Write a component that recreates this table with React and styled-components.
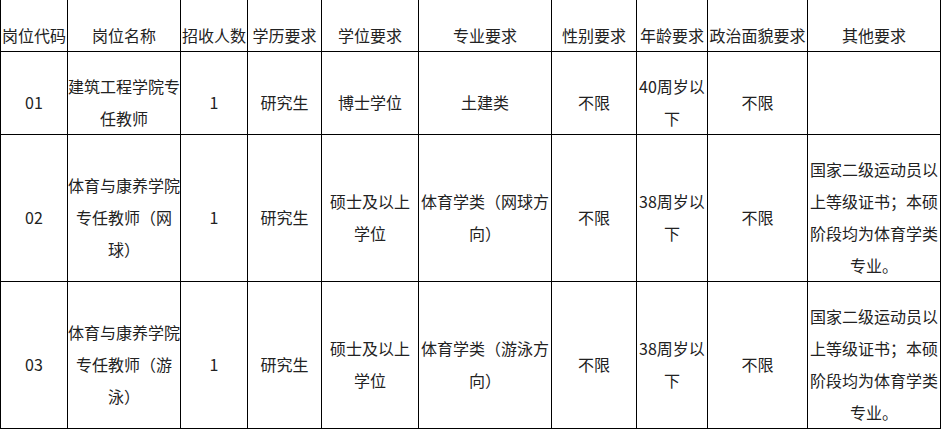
import React from 'react'
import styled, { createGlobalStyle } from 'styled-components'

const Global = createGlobalStyle`
  body {
    margin: 0;
    background: #fff;
  }
`

const Table = styled.table`
  border-collapse: collapse;
  table-layout: fixed;
  width: 940px;
  font-family: "Noto Sans CJK SC", "Noto Sans", sans-serif;
  font-size: 16px;
  line-height: 32px;
  color: #222;
`

const Col = styled.col`
  width: ${({ $w }) => $w}px;
`

const Cell = styled.td`
  border: 1px solid #000;
  padding: 18px 0 0;
  text-align: center;
  vertical-align: middle;
  white-space: nowrap;
  overflow: hidden;
`

const HeadCell = styled(Cell).attrs({ as: 'th' })`
  border-top: none;
  padding-top: 19px;
  font-weight: normal;
`

const widths = [67, 113, 67, 74, 97, 133, 85, 71, 100, 133]

const head = ['岗位代码', '岗位名称', '招收人数', '学历要求', '学位要求', '专业要求', '性别要求', '年龄要求', '政治面貌要求', '其他要求']

const other = ['国家二级运动员以', '上等级证书；本硕', '阶段均为体育学类', '专业。']

const rows = [
  [['01'], ['建筑工程学院专', '任教师'], ['1'], ['研究生'], ['博士学位'], ['土建类'], ['不限'], ['40周岁以', '下'], ['不限'], []],
  [['02'], ['体育与康养学院', '专任教师（网', '球）'], ['1'], ['研究生'], ['硕士及以上', '学位'], ['体育学类（网球方', '向）'], ['不限'], ['38周岁以', '下'], ['不限'], other],
  [['03'], ['体育与康养学院', '专任教师（游', '泳）'], ['1'], ['研究生'], ['硕士及以上', '学位'], ['体育学类（游泳方', '向）'], ['不限'], ['38周岁以', '下'], ['不限'], other],
]

const Lines = ({ lines }) =>
  lines.map((l, i) => (
    <React.Fragment key={i}>
      {i > 0 && <br />}
      {l}
    </React.Fragment>
  ))

export default function App() {
  return (
    <>
      <Global />
      <Table>
        <colgroup>
          {widths.map((w, i) => (
            <Col key={i} $w={w} />
          ))}
        </colgroup>
        <thead>
          <tr>
            {head.map((h) => (
              <HeadCell key={h}>{h}</HeadCell>
            ))}
          </tr>
        </thead>
        <tbody>
          {rows.map((r, ri) => (
            <tr key={ri}>
              {r.map((c, ci) => (
                <Cell key={ci}>
                  <Lines lines={c} />
                </Cell>
              ))}
            </tr>
          ))}
        </tbody>
      </Table>
    </>
  )
}
